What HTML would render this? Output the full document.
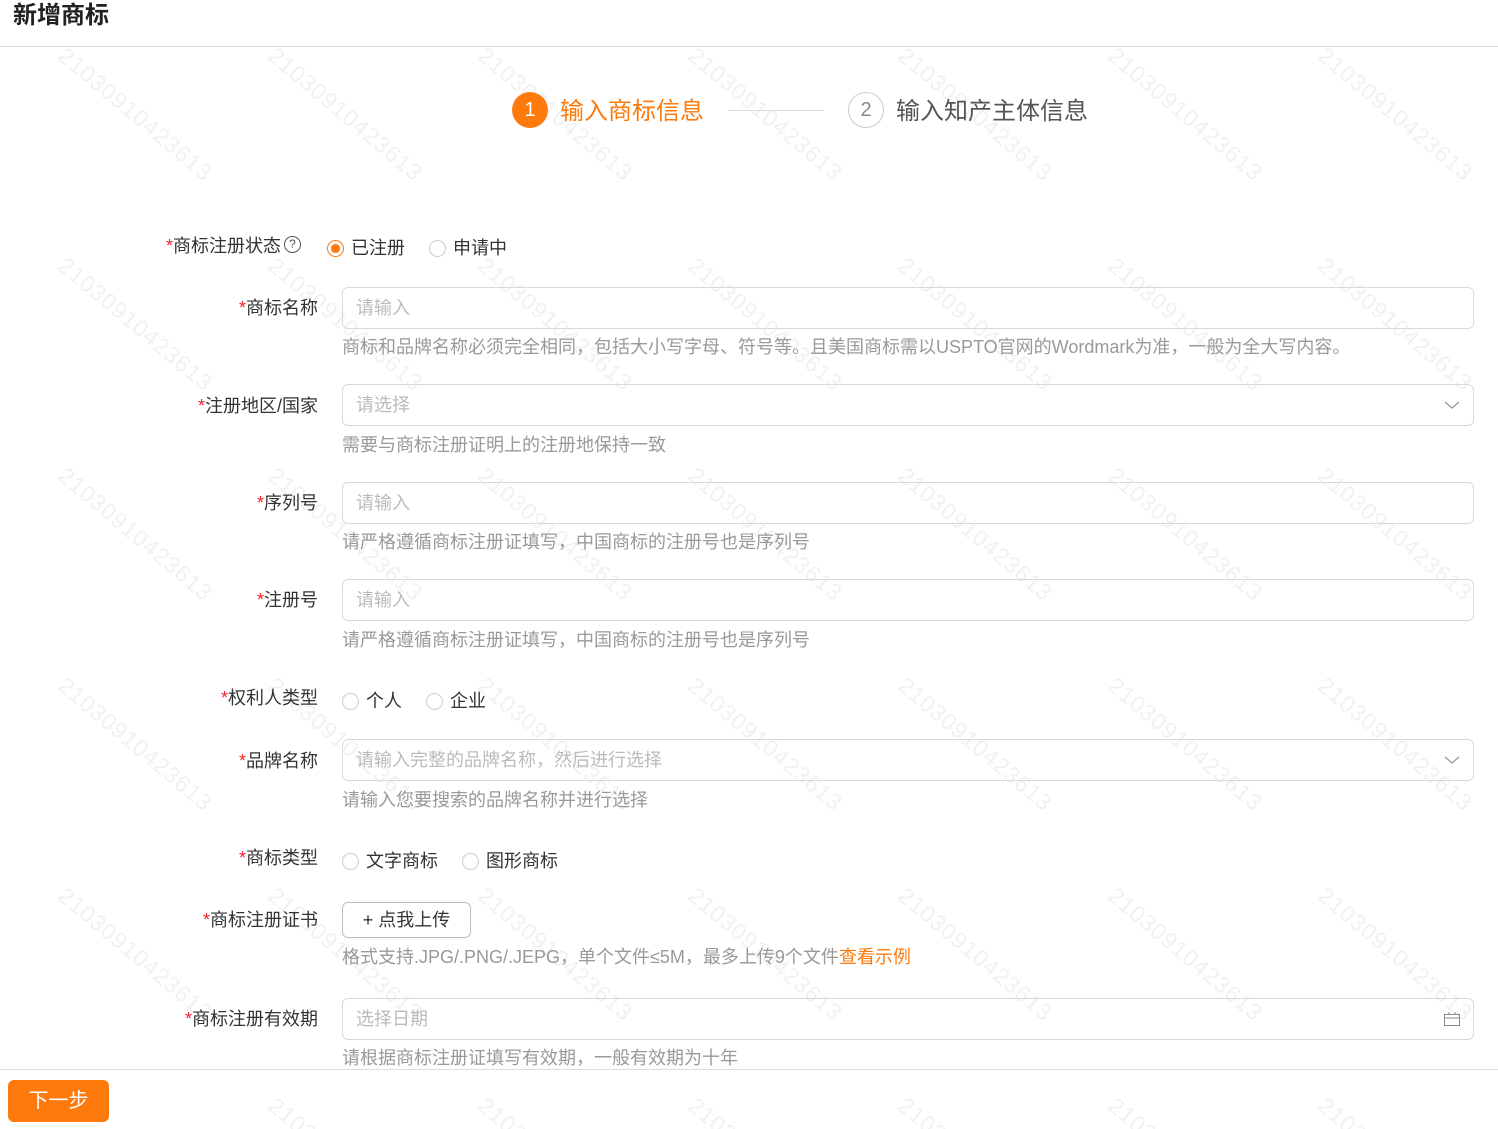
<!DOCTYPE html>
<html><head><meta charset="utf-8"><style>
*{margin:0;padding:0;box-sizing:border-box}
html{width:1498px;height:1129px;overflow:hidden}
body{width:1498px;height:1129px;position:relative;overflow:hidden;background:#fff;font-family:"Liberation Sans","Noto Sans CJK SC",sans-serif;color:#333}
.a{position:absolute;white-space:nowrap}
#w{position:absolute;left:0;top:0;width:1498px;height:1129px;overflow:hidden}
.wm{position:absolute;font-size:23px;color:#f1f1f1;transform:rotate(40deg);transform-origin:0 0;letter-spacing:1px;white-space:nowrap}
.lab{position:absolute;right:1180px;font-size:18px;color:#333;line-height:24px;white-space:nowrap}
.lab i{color:#f5222d;font-style:normal}
.inp{position:absolute;left:342px;width:1132px;height:42px;border:1px solid #d9d9d9;border-radius:6px;font-size:18px;color:#bbb;padding-left:13px;line-height:40px;background:transparent}
.help{position:absolute;left:342px;font-size:18px;color:#999;line-height:24px;white-space:nowrap}
.r{position:absolute;font-size:18px;color:#333;line-height:24px;white-space:nowrap}
.r:before{content:"";position:absolute;left:-24px;top:4px;width:15px;height:15px;border:1px solid #ccc;border-radius:50%}
.r.on:before{border-color:#ff7a0d;background:radial-gradient(#ff7a0d 4px,#fff 5px)}
</style></head><body>
<div id="w">
<div class="wm" style="left:70px;top:42px">21030910423613</div><div class="wm" style="left:280px;top:42px">21030910423613</div><div class="wm" style="left:490px;top:42px">21030910423613</div><div class="wm" style="left:700px;top:42px">21030910423613</div><div class="wm" style="left:910px;top:42px">21030910423613</div><div class="wm" style="left:1120px;top:42px">21030910423613</div><div class="wm" style="left:1330px;top:42px">21030910423613</div>
<div class="wm" style="left:70px;top:252px">21030910423613</div><div class="wm" style="left:280px;top:252px">21030910423613</div><div class="wm" style="left:490px;top:252px">21030910423613</div><div class="wm" style="left:700px;top:252px">21030910423613</div><div class="wm" style="left:910px;top:252px">21030910423613</div><div class="wm" style="left:1120px;top:252px">21030910423613</div><div class="wm" style="left:1330px;top:252px">21030910423613</div>
<div class="wm" style="left:70px;top:462px">21030910423613</div><div class="wm" style="left:280px;top:462px">21030910423613</div><div class="wm" style="left:490px;top:462px">21030910423613</div><div class="wm" style="left:700px;top:462px">21030910423613</div><div class="wm" style="left:910px;top:462px">21030910423613</div><div class="wm" style="left:1120px;top:462px">21030910423613</div><div class="wm" style="left:1330px;top:462px">21030910423613</div>
<div class="wm" style="left:70px;top:672px">21030910423613</div><div class="wm" style="left:280px;top:672px">21030910423613</div><div class="wm" style="left:490px;top:672px">21030910423613</div><div class="wm" style="left:700px;top:672px">21030910423613</div><div class="wm" style="left:910px;top:672px">21030910423613</div><div class="wm" style="left:1120px;top:672px">21030910423613</div><div class="wm" style="left:1330px;top:672px">21030910423613</div>
<div class="wm" style="left:70px;top:882px">21030910423613</div><div class="wm" style="left:280px;top:882px">21030910423613</div><div class="wm" style="left:490px;top:882px">21030910423613</div><div class="wm" style="left:700px;top:882px">21030910423613</div><div class="wm" style="left:910px;top:882px">21030910423613</div><div class="wm" style="left:1120px;top:882px">21030910423613</div><div class="wm" style="left:1330px;top:882px">21030910423613</div>
<div class="wm" style="left:280px;top:1092px">21030910423613</div><div class="wm" style="left:490px;top:1092px">21030910423613</div><div class="wm" style="left:700px;top:1092px">21030910423613</div><div class="wm" style="left:910px;top:1092px">21030910423613</div><div class="wm" style="left:1120px;top:1092px">21030910423613</div><div class="wm" style="left:1330px;top:1092px">21030910423613</div>
</div>

<div class="a" style="left:13px;top:1px;font-size:24px;font-weight:bold;color:#222;line-height:30px">新增商标</div>
<div class="a" style="left:0;top:46px;width:1498px;height:1px;background:#ddd"></div>

<div class="a" style="left:512px;top:92px;width:36px;height:36px;border-radius:50%;background:#ff7a0d;color:#fff;font-size:20px;line-height:36px;text-align:center">1</div>
<div class="a" style="left:560px;top:97px;font-size:24px;color:#ff7a0d;line-height:30px">输入商标信息</div>
<div class="a" style="left:728px;top:110px;width:96px;height:1px;background:#ddd"></div>
<div class="a" style="left:848px;top:92px;width:36px;height:36px;border-radius:50%;border:1px solid #ccc;color:#888;font-size:20px;line-height:34px;text-align:center">2</div>
<div class="a" style="left:896px;top:97px;font-size:24px;color:#555;line-height:30px">输入知产主体信息</div>

<div class="lab" style="right:1217px;top:234px"><i>*</i>商标注册状态</div>
<div class="a" style="left:284px;top:236px;width:17px;height:17px;border:1px solid #555;border-radius:50%;font-size:12px;line-height:15px;text-align:center;color:#555">?</div>
<div class="r on" style="left:351px;top:236px">已注册</div>
<div class="r" style="left:453px;top:236px">申请中</div>

<div class="lab" style="top:296px"><i>*</i>商标名称</div>
<div class="inp" style="top:287px">请输入</div>
<div class="help" style="top:335px">商标和品牌名称必须完全相同，包括大小写字母、符号等。且美国商标需以USPTO官网的Wordmark为准，一般为全大写内容。</div>

<div class="lab" style="top:394px"><i>*</i>注册地区/国家</div>
<div class="inp" style="top:384px">请选择</div>
<svg class="a" style="left:1444px;top:399px" width="16" height="12"><path d="M1 3l7 6 7-6" fill="none" stroke="#999" stroke-width="1.3"/></svg>
<div class="help" style="top:433px">需要与商标注册证明上的注册地保持一致</div>

<div class="lab" style="top:491px"><i>*</i>序列号</div>
<div class="inp" style="top:482px">请输入</div>
<div class="help" style="top:530px">请严格遵循商标注册证填写，中国商标的注册号也是序列号</div>

<div class="lab" style="top:588px"><i>*</i>注册号</div>
<div class="inp" style="top:579px">请输入</div>
<div class="help" style="top:628px">请严格遵循商标注册证填写，中国商标的注册号也是序列号</div>

<div class="lab" style="top:686px"><i>*</i>权利人类型</div>
<div class="r" style="left:366px;top:689px">个人</div>
<div class="r" style="left:450px;top:689px">企业</div>

<div class="lab" style="top:749px"><i>*</i>品牌名称</div>
<div class="inp" style="top:739px">请输入完整的品牌名称，然后进行选择</div>
<svg class="a" style="left:1444px;top:754px" width="16" height="12"><path d="M1 3l7 6 7-6" fill="none" stroke="#999" stroke-width="1.3"/></svg>
<div class="help" style="top:788px">请输入您要搜索的品牌名称并进行选择</div>

<div class="lab" style="top:846px"><i>*</i>商标类型</div>
<div class="r" style="left:366px;top:849px">文字商标</div>
<div class="r" style="left:486px;top:849px">图形商标</div>

<div class="lab" style="top:908px"><i>*</i>商标注册证书</div>
<div class="a" style="left:342px;top:902px;width:129px;height:36px;border:1px solid #bbb;border-radius:6px;font-size:18px;line-height:34px;text-align:center;color:#333">+ 点我上传</div>
<div class="help" style="top:945px">格式支持.JPG/.PNG/.JEPG，单个文件≤5M，最多上传9个文件<span style="color:#ff7a0d">查看示例</span></div>

<div class="lab" style="top:1007px"><i>*</i>商标注册有效期</div>
<div class="inp" style="top:998px">选择日期</div>
<svg class="a" style="left:1443px;top:1010px" width="18" height="18"><rect x="1.5" y="4.5" width="15" height="11" fill="none" stroke="#888"/><path d="M1.5 8h15M6 2v3M12 2v3" stroke="#888" fill="none"/></svg>
<div class="help" style="top:1046px">请根据商标注册证填写有效期，一般有效期为十年</div>

<div class="a" style="left:0;top:1069px;width:1498px;height:1px;background:#ddd"></div>
<div class="a" style="left:8px;top:1080px;width:101px;height:42px;background:#ff7a0d;border-radius:6px;color:#fff;font-size:20px;line-height:42px;text-align:center">下一步</div>
</body></html>
